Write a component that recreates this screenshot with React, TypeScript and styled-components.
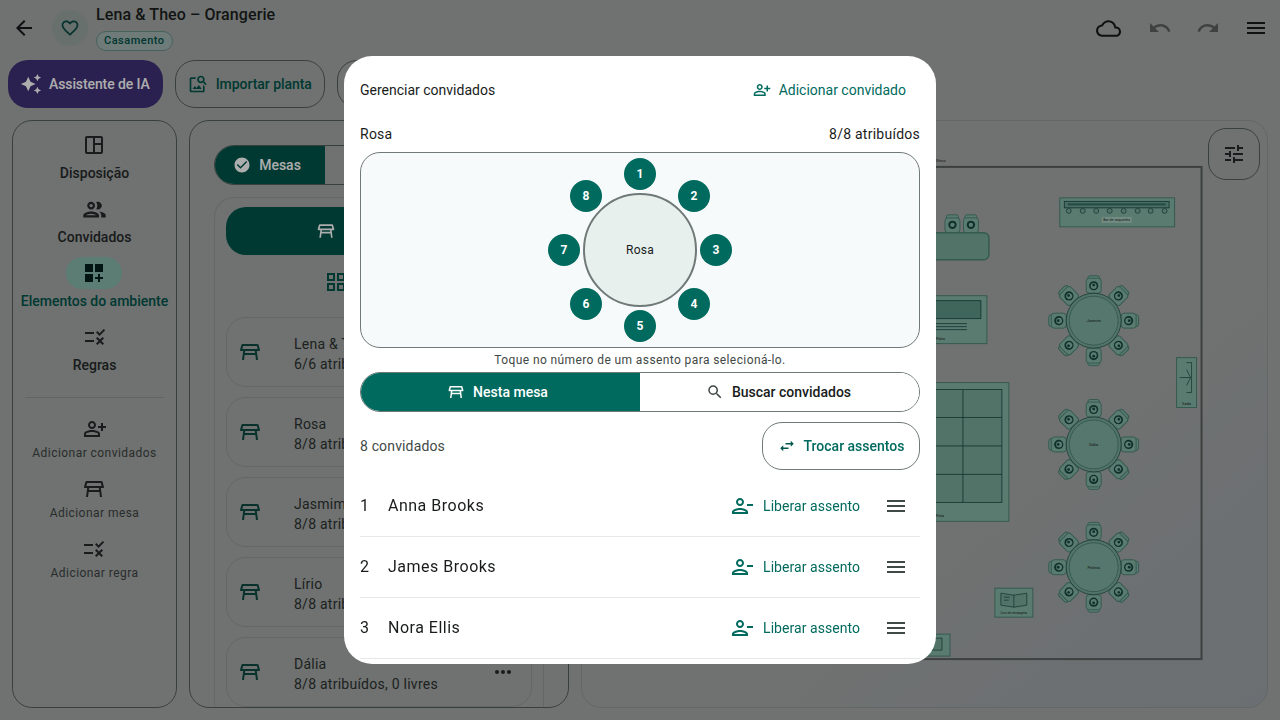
import * as React from "react"
import styled, { createGlobalStyle } from "styled-components"
import {
  MdArrowBack, MdFavoriteBorder, MdAutoAwesome, MdOutlineImageSearch, MdOutlineSpaceDashboard,
  MdOutlineGroup, MdDashboardCustomize, MdRule, MdOutlinePersonAddAlt, MdOutlineTableRestaurant,
  MdCheckCircle, MdOutlineGridView, MdOutlineCloud, MdUndo, MdRedo, MdMenu, MdTune, MdSearch,
  MdSwapHoriz, MdMoreHoriz, MdOutlinePersonRemove, MdOutlineViewInAr,
} from "react-icons/md"

const GlobalStyle = createGlobalStyle`
  html, body { margin: 0; height: 100%; overflow: hidden; }
  body { font-family: Roboto, "Liberation Sans", sans-serif; color: #1a1e1d; background: #a4a8a6; }
  * { box-sizing: border-box; }
`

const Page = styled.div`
  width: 1280px;
  height: 720px;
  display: flex;
  flex-direction: column;
  background: #a4a8a6;
`

const Header = styled.header`
  height: 56px;
  flex: none;
  display: flex;
  align-items: center;
  padding: 0 0 0 12px;
`

const IconSlot = styled.span<{ $color?: string }>`
  width: 48px;
  height: 48px;
  flex: none;
  display: flex;
  align-items: center;
  justify-content: center;
  font-size: 24px;
  color: ${p => p.$color || "#15191a"};
`

const BackSlot = styled(IconSlot)`
  width: 24px;
`

const CloudSlot = styled(IconSlot)`
  margin-right: 4px;
  font-size: 25px;
`

const HeartBadge = styled.span`
  width: 36px;
  height: 36px;
  margin-left: 16px;
  border-radius: 50%;
  background: #9aa5a3;
  color: #0b4a44;
  display: flex;
  align-items: center;
  justify-content: center;
  font-size: 20px;
`

const TitleBlock = styled.div`
  margin: -2px 0 0 8px;
  display: flex;
  flex-direction: column;
  align-items: flex-start;
`

const Title = styled.div`
  font-size: 16px;
  font-weight: 500;
  line-height: 24px;
  letter-spacing: 0.1px;
`

const Chip = styled.span`
  height: 20px;
  padding: 0 7px;
  margin-top: 4px;
  border: 1px solid #6c908a;
  border-radius: 10px;
  background: #a2b5b1;
  color: #00504a;
  font-size: 11px;
  font-weight: 500;
  line-height: 18px;
  letter-spacing: 0.5px;
`

const HeaderActions = styled.div`
  margin-left: auto;
  display: flex;
`

const Toolbar = styled.div`
  flex: none;
  height: 48px;
  margin-top: 4px;
  padding-left: 8px;
  display: flex;
  gap: 12px;
`

const ToolButton = styled.button<{ $ai?: boolean }>`
  height: 48px;
  padding: ${p => (p.$ai ? "0 13px 0 12px" : "0 12px")};
  display: flex;
  align-items: center;
  gap: ${p => (p.$ai ? "7px" : "8px")};
  border: ${p => (p.$ai ? "none" : "1px solid #55605e")};
  border-radius: 20px;
  background: ${p => (p.$ai ? "#3f3177" : "transparent")};
  color: ${p => (p.$ai ? "#fff" : "#00544a")};
  font: 500 14px Roboto, sans-serif;
  letter-spacing: ${p => (p.$ai ? "-0.1px" : "-0.05px")};
  svg { font-size: ${p => (p.$ai ? "22px" : "20px")}; flex: none; }
`

const Workspace = styled.main`
  flex: 1;
  min-height: 0;
  padding: 12px 12px 12px;
  display: flex;
  gap: 12px;
`

const NavPanel = styled.nav`
  width: 165px;
  flex: none;
  padding-top: 8px;
  border: 1px solid #55605e;
  border-radius: 20px;
  display: flex;
  flex-direction: column;
  align-items: center;
  gap: 10px;
`

const NavItem = styled.div<{ $active?: boolean }>`
  display: flex;
  flex-direction: column;
  align-items: center;
  gap: 2px;
  font-size: 14px;
  font-weight: 500;
  line-height: 20px;
  white-space: nowrap;
  color: ${p => (p.$active ? "#00544a" : "#25292a")};
`

const NavPill = styled.span<{ $active?: boolean }>`
  width: 56px;
  height: 32px;
  border-radius: 16px;
  background: ${p => (p.$active ? "#87b9ac" : "transparent")};
  color: ${p => (p.$active ? "#04201b" : "#25292a")};
  display: flex;
  align-items: center;
  justify-content: center;
  font-size: 24px;
`

const NavDivider = styled.hr`
  width: 139px;
  height: 1px;
  margin: 12px 0 9px;
  border: none;
  background: #8f9492;
`

const ActionItem = styled.div`
  height: 44px;
  margin-bottom: 6px;
  display: flex;
  flex-direction: column;
  align-items: center;
  gap: 4px;
  font-size: 12px;
  line-height: 16px;
  letter-spacing: 0.45px;
  white-space: nowrap;
  color: #3d4343;
  svg { font-size: 24px; flex: none; color: #25292a; }
`

const ListPanel = styled.section`
  width: 380px;
  flex: none;
  padding: 24px 24px 0;
  border: 1px solid #55605e;
  border-radius: 20px;
  overflow: hidden;
  display: flex;
  flex-direction: column;
`

const Tabs = styled.div`
  flex: none;
  height: 40px;
  display: flex;
  border: 1px solid #55605e;
  border-radius: 20px;
  overflow: hidden;
`

const Tab = styled.div<{ $active?: boolean }>`
  width: ${p => (p.$active ? "110px" : "auto")};
  flex: ${p => (p.$active ? "none" : "1")};
  padding-right: ${p => (p.$active ? "6px" : "0")};
  display: flex;
  align-items: center;
  justify-content: center;
  gap: 8px;
  background: ${p => (p.$active ? "#00544a" : "transparent")};
  color: ${p => (p.$active ? "#fff" : "#25292a")};
  font-size: 14px;
  font-weight: 500;
  svg { font-size: 18px; }
`

const InnerPanel = styled.div`
  flex: 1;
  min-height: 0;
  margin-top: 12px;
  padding: 9px 11px 0;
  border: 1px solid #939896;
  border-bottom: none;
  border-radius: 20px 20px 0 0;
  display: flex;
  flex-direction: column;
`

const PrimaryWide = styled.div`
  flex: none;
  height: 48px;
  border-radius: 20px;
  background: #00544a;
  color: #fff;
  display: flex;
  align-items: center;
  justify-content: center;
  gap: 8px;
  font-size: 14px;
  font-weight: 500;
  svg { font-size: 20px; }
`

const ViewToggle = styled.div`
  flex: none;
  height: 48px;
  margin: 3px 0 11px;
  padding-left: 4px;
  display: flex;
  align-items: center;
  justify-content: center;
  gap: 8px;
  color: #00544a;
  font-size: 14px;
  svg { font-size: 24px; }
`

const TableCard = styled.article`
  flex: none;
  height: 70px;
  margin-bottom: 10px;
  padding: 0 16px 0 11px;
  border: 1px solid #939896;
  border-radius: 20px;
  display: flex;
  align-items: center;
  gap: 32px;
  > svg { font-size: 24px; flex: none; color: #0e4a43; }
`

const CardText = styled.div`
  flex: 1;
  padding-top: 3px;
  font-size: 14px;
  line-height: 20px;
  letter-spacing: 0.25px;
  color: #2c3130;
`

const CardMore = styled.span`
  font-size: 24px;
  display: flex;
  color: #25292a;
`

const PlanPanel = styled.section`
  flex: 1;
  min-width: 0;
  position: relative;
  border: 1px solid #939896;
  border-radius: 20px;
  overflow: hidden;
  background: linear-gradient(140deg, #a4a8a6 62%, #9ea4aa 100%);
`

const PlanSvg = styled.svg`
  display: block;
  width: 100%;
  height: 100%;
`

const SettingsButton = styled.button`
  position: absolute;
  top: 7px;
  right: 7px;
  width: 52px;
  height: 52px;
  padding: 0;
  border: 1px solid #55605e;
  border-radius: 18px;
  background: #a4a8a6;
  color: #25292a;
  font-size: 24px;
  display: flex;
  align-items: center;
  justify-content: center;
`

const Scrim = styled.div`
  position: fixed;
  inset: 0;
  background: rgba(0, 0, 0, 0.32);
  display: flex;
  align-items: flex-start;
  justify-content: center;
  padding-top: 56px;
`

const Modal = styled.div`
  width: 592px;
  height: 608px;
  padding: 16px 16px 0;
  border-radius: 28px;
  background: #fff;
  color: #191c1b;
  overflow: hidden;
  display: flex;
  flex-direction: column;
`

const ModalHeader = styled.div`
  flex: none;
  height: 36px;
  display: flex;
  align-items: center;
  justify-content: space-between;
  padding-right: 14px;
  font-size: 14px;
  font-weight: 450;
`

const AddGuest = styled.span`
  display: flex;
  align-items: center;
  gap: 8px;
  color: #006a5e;
  svg { font-size: 18px; }
`

const TableLine = styled.div`
  flex: none;
  height: 20px;
  margin-top: 16px;
  display: flex;
  justify-content: space-between;
  font-size: 14px;
  font-weight: 450;
  line-height: 20px;
  letter-spacing: 0.25px;
`

const Diagram = styled.div`
  flex: none;
  height: 196px;
  margin-top: 8px;
  border: 1px solid #6f7977;
  border-radius: 20px;
  background: #f7fafa;
  position: relative;
`

const RoundTable = styled.div`
  position: absolute;
  left: 222px;
  top: 40px;
  width: 114px;
  height: 114px;
  border: 2px solid #6f7977;
  border-radius: 50%;
  background: #e7f0ed;
  display: flex;
  align-items: center;
  justify-content: center;
  font-size: 12px;
  letter-spacing: 0.2px;
`

const Seat = styled.div`
  position: absolute;
  width: 32px;
  height: 32px;
  margin: -16px 0 0 -16px;
  border-radius: 50%;
  background: #006a5e;
  color: #fff;
  font-size: 12px;
  font-weight: 700;
  display: flex;
  align-items: center;
  justify-content: center;
`

const Caption = styled.div`
  flex: none;
  height: 16px;
  margin-top: 4px;
  font-size: 12px;
  line-height: 16px;
  letter-spacing: 0.4px;
  text-align: center;
  color: #3f4946;
`

const ModalTabs = styled.div`
  flex: none;
  height: 40px;
  margin-top: 4px;
  display: flex;
  border: 1px solid #6f7977;
  border-radius: 20px;
  overflow: hidden;
`

const ModalTab = styled.div<{ $active?: boolean }>`
  flex: 1 1 50%;
  padding-right: ${p => (p.$active ? "6px" : "2px")};
  display: flex;
  align-items: center;
  justify-content: center;
  gap: 8px;
  background: ${p => (p.$active ? "#006a5e" : "#fff")};
  color: ${p => (p.$active ? "#fff" : "#191c1b")};
  font-size: 14px;
  font-weight: 500;
  svg { font-size: 18px; color: ${p => (p.$active ? "#fff" : "#3f4946")}; }
`

const CountRow = styled.div`
  flex: none;
  height: 48px;
  margin-top: 10px;
  display: flex;
  align-items: center;
  justify-content: space-between;
  font-size: 14px;
  letter-spacing: 0.15px;
  color: #3f4946;
`

const SwapButton = styled.span`
  width: 158px;
  height: 48px;
  border: 1px solid #6f7977;
  border-radius: 20px;
  display: flex;
  align-items: center;
  justify-content: center;
  gap: 8px;
  color: #006a5e;
  font-size: 14px;
  font-weight: 500;
  letter-spacing: 0;
  svg { font-size: 18px; color: #00564c; }
`

const GuestList = styled.div`
  margin-top: 6px;
`

const GuestRow = styled.div`
  height: 61px;
  padding-right: 12px;
  border-bottom: 1px solid #e6e9e8;
  display: flex;
  align-items: center;
`

const GuestName = styled.span`
  margin-bottom: 2px;
  display: flex;
  font-size: 16px;
  letter-spacing: 0.5px;
  color: #191c1b;
`

const SeatNumber = styled.span`
  width: 28px;
  flex: none;
`

const Release = styled.span`
  margin-left: auto;
  display: flex;
  align-items: center;
  gap: 9px;
  font-size: 14px;
  letter-spacing: 0.05px;
  color: #006a5e;
  svg { font-size: 24px; }
`

const DragHandle = styled.span`
  margin-left: 24px;
  font-size: 24px;
  display: flex;
  color: #3f4946;
`

const cards = [
  { name: "Lena & Theo", info: "6/6 atribuídos, 0 livres" },
  { name: "Rosa", info: "8/8 atribuídos, 0 livres" },
  { name: "Jasmim", info: "8/8 atribuídos, 0 livres" },
  { name: "Lírio", info: "8/8 atribuídos, 0 livres" },
  { name: "Dália", info: "8/8 atribuídos, 0 livres" },
]

const seats = [
  { n: 1, x: 279, y: 21 }, { n: 2, x: 333, y: 43 }, { n: 3, x: 355, y: 97 }, { n: 4, x: 333, y: 151 },
  { n: 5, x: 279, y: 173 }, { n: 6, x: 225, y: 151 }, { n: 7, x: 203, y: 97 }, { n: 8, x: 225, y: 43 },
]

const guests = ["Anna Brooks", "James Brooks", "Nora Ellis"]

const planFill = "#85b5a6"
const planLine = "#4f8576"
const planDark = "#164a40"

const Chair = ({ angle }: { angle: number }) => (
  <g transform={`rotate(${angle}) translate(0 -35)`}>
    <rect x={-6} y={-10} width={12} height={9} rx={2.5} fill={planFill} stroke={planLine} />
    <rect x={-7.5} y={-7.5} width={15} height={15} rx={3} fill={planFill} stroke={planLine} />
    <circle r={4.6} fill={planDark} />
    <circle r={3} cy={0.3} fill={planFill} />
    <circle r={1.4} cy={-0.6} fill={planDark} />
  </g>
)

const Round = ({ x, y, label }: { x: number; y: number; label: string }) => (
  <g transform={`translate(${x} ${y})`}>
    {[0, 45, 90, 135, 180, 225, 270, 315].map(a => <Chair key={a} angle={a} />)}
    <circle r={27.5} fill="#78aa9a" stroke={planDark} strokeOpacity={0.7} />
    <circle r={24.5} fill="#7fb0a1" stroke={planLine} />
    <text y={1.5} textAnchor="middle" fontSize={4} fill="#1a2422">{label}</text>
  </g>
)

const FloorPlan = () => (
  <PlanSvg viewBox="0 0 685 587">
    <g transform="translate(-582 -121)" fontFamily="Roboto, sans-serif">
      <text x={936} y={162} fontSize={4} fill="#333">Mesa</text>
      <rect x={600} y={167} width={602} height={493} fill="none" stroke="#59615f" strokeWidth={2} />

      {[952.5, 971].map(x => (
        <g key={x} transform={`translate(${x} 224)`}>
          <rect x={-6} y={-9} width={12} height={8} rx={2} fill={planFill} stroke={planLine} />
          <rect x={-7.5} y={-6} width={15} height={15} rx={3} fill={planFill} stroke={planLine} />
          <circle cy={1} r={4.2} fill={planDark} />
          <circle cy={1} r={2.2} fill={planFill} />
        </g>
      ))}
      <rect x={800} y={233} width={189} height={27} rx={5} fill="#78aa9a" stroke={planLine} strokeWidth={1.5} />

      <rect x={1060} y={198} width={115} height={29} fill={planFill} stroke={planLine} />
      <rect x={1064.5} y={201.5} width={105} height={6.5} fill="#6aa292" stroke={planDark} strokeWidth={0.8} />
      <rect x={1068} y={203.5} width={98} height={2} fill={planDark} opacity={0.6} />
      {[1069, 1083, 1096.5, 1110, 1124, 1138, 1151, 1165].map(x => (
        <circle key={x} cx={x} cy={211} r={2.5} fill="#78aa9a" stroke={planDark} strokeWidth={0.7} />
      ))}
      <rect x={1102} y={217} width={30} height={6} fill="#b9d9cf" opacity={0.7} />
      <text x={1117} y={221.5} textAnchor="middle" fontSize={3.6} fill="#1a2422">Bar de coquetéis</text>

      <rect x={800} y={296} width={187} height={48} fill={planFill} stroke={planLine} />
      <rect x={800} y={301} width={181} height={18} fill="#5f9786" stroke={planDark} strokeWidth={0.8} />
      {[324, 327, 330].map(y => <line key={y} x1={800} x2={967} y1={y} y2={y} stroke={planDark} strokeWidth={0.8} />)}
      <text x={936} y={340} fontSize={3.6} fill="#1a2422">Palco</text>

      <Round x={1094} y={321} label="Jasmim" />
      <Round x={1094} y={445} label="Dália" />
      <Round x={1094} y={568} label="Peônia" />

      <rect x={1177} y={358} width={20} height={50} fill={planFill} stroke={planLine} />
      <path d="M1187 363h5v30h-5M1180 378h11M1187 370l4 8-4 8" fill="none" stroke={planDark} strokeWidth={0.7} />
      <text x={1187} y={405.5} textAnchor="middle" fontSize={3.6} fill="#1a2422">Saída</text>

      <rect x={800} y={383} width={209} height={139} fill={planFill} stroke={planLine} />
      <rect x={800} y={390} width={202} height={113} fill="#78aa9a" stroke={planDark} strokeWidth={0.8} />
      <line x1={963} x2={963} y1={390} y2={503} stroke={planDark} strokeWidth={0.8} />
      {[418, 446.5, 475].map(y => <line key={y} x1={800} x2={1002} y1={y} y2={y} stroke={planDark} strokeWidth={0.8} />)}
      <text x={936} y={518} fontSize={3.6} fill="#1a2422">Pista</text>

      <rect x={995} y={589} width={38} height={29} fill={planFill} stroke={planLine} />
      <path d="M1014 596l-13-2v12l13 2 13-2v-12zM1014 596v12M1004 598h6M1004 601h5" fill="#78aa9a" stroke={planDark} strokeWidth={0.7} />
      <text x={1014} y={614.5} textAnchor="middle" fontSize={3} fill="#1a2422">Livro de mensagens</text>

      <rect x={900} y={635} width={50} height={22} fill={planFill} stroke={planLine} />
      <rect x={925} y={639} width={17} height={12} fill="#78aa9a" stroke={planDark} strokeWidth={0.7} />
    </g>
  </PlanSvg>
)

export default function App() {
  return (
    <>
      <GlobalStyle />
      <Page>
        <Header>
          <BackSlot><MdArrowBack /></BackSlot>
          <HeartBadge><MdFavoriteBorder /></HeartBadge>
          <TitleBlock>
            <Title>Lena &amp; Theo – Orangerie</Title>
            <Chip>Casamento</Chip>
          </TitleBlock>
          <HeaderActions>
            <CloudSlot><MdOutlineCloud /></CloudSlot>
            <IconSlot $color="#5d6160"><MdUndo /></IconSlot>
            <IconSlot $color="#5d6160"><MdRedo /></IconSlot>
            <IconSlot><MdMenu /></IconSlot>
          </HeaderActions>
        </Header>

        <Toolbar>
          <ToolButton $ai><MdAutoAwesome />Assistente de IA</ToolButton>
          <ToolButton><MdOutlineImageSearch />Importar planta</ToolButton>
          <ToolButton><MdOutlineViewInAr />Visualizar em 3D</ToolButton>
        </Toolbar>

        <Workspace>
          <NavPanel>
            <NavItem><NavPill><MdOutlineSpaceDashboard /></NavPill>Disposição</NavItem>
            <NavItem><NavPill><MdOutlineGroup size={27} /></NavPill>Convidados</NavItem>
            <NavItem $active><NavPill $active><MdDashboardCustomize /></NavPill>Elementos do ambiente</NavItem>
            <NavItem><NavPill><MdRule /></NavPill>Regras</NavItem>
            <NavDivider />
            <ActionItem><MdOutlinePersonAddAlt />Adicionar convidados</ActionItem>
            <ActionItem><MdOutlineTableRestaurant />Adicionar mesa</ActionItem>
            <ActionItem><MdRule />Adicionar regra</ActionItem>
          </NavPanel>

          <ListPanel>
            <Tabs>
              <Tab $active><MdCheckCircle />Mesas</Tab>
              <Tab><MdOutlineTableRestaurant />Objetos</Tab>
            </Tabs>
            <InnerPanel>
              <PrimaryWide><MdOutlineTableRestaurant />Adicionar mesa</PrimaryWide>
              <ViewToggle><MdOutlineGridView />Ver em grade</ViewToggle>
              {cards.map(c => (
                <TableCard key={c.name}>
                  <MdOutlineTableRestaurant />
                  <CardText>{c.name}<br />{c.info}</CardText>
                  <CardMore><MdMoreHoriz /></CardMore>
                </TableCard>
              ))}
            </InnerPanel>
          </ListPanel>

          <PlanPanel>
            <FloorPlan />
            <SettingsButton><MdTune /></SettingsButton>
          </PlanPanel>
        </Workspace>
      </Page>

      <Scrim>
        <Modal>
          <ModalHeader>
            <span>Gerenciar convidados</span>
            <AddGuest><MdOutlinePersonAddAlt /><span>Adicionar convidado</span></AddGuest>
          </ModalHeader>
          <TableLine><span>Rosa</span><span>8/8 atribuídos</span></TableLine>
          <Diagram>
            <RoundTable>Rosa</RoundTable>
            {seats.map(s => (
              <Seat key={s.n} style={{ left: s.x, top: s.y }}>{s.n}</Seat>
            ))}
          </Diagram>
          <Caption>Toque no número de um assento para selecioná-lo.</Caption>
          <ModalTabs>
            <ModalTab $active><MdOutlineTableRestaurant />Nesta mesa</ModalTab>
            <ModalTab><MdSearch />Buscar convidados</ModalTab>
          </ModalTabs>
          <CountRow>
            <span>8 convidados</span>
            <SwapButton><MdSwapHoriz /><span>Trocar assentos</span></SwapButton>
          </CountRow>
          <GuestList>
            {guests.map((g, i) => (
              <GuestRow key={g}>
                <GuestName><SeatNumber>{i + 1}</SeatNumber>{g}</GuestName>
                <Release><MdOutlinePersonRemove />Liberar assento</Release>
                <DragHandle><MdMenu /></DragHandle>
              </GuestRow>
            ))}
          </GuestList>
        </Modal>
      </Scrim>
    </>
  )
}
